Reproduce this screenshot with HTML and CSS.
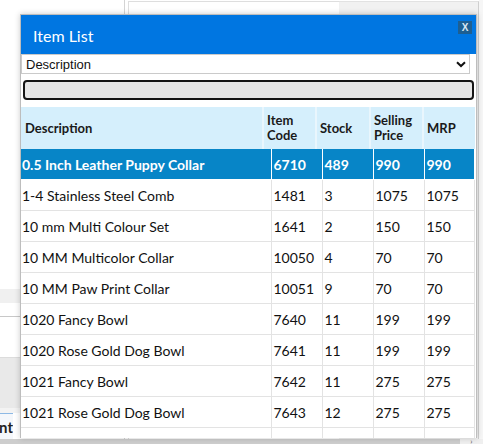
FILE: index.html
```html
<!DOCTYPE html>
<html lang="en">
<head>
  <meta charset="UTF-8" />
  <title>Item List</title>
  <link rel="stylesheet" href="styles.css">
</head>
<body>
  <div class="page">
    <div class="side">
      <div class="side-top"></div>
      <div class="side-band"></div>
      <div class="side-gap"></div>
      <div class="side-box"></div>
      <div class="side-gray"></div>
      <div class="side-tab"><span>Amount</span></div>
    </div>
    <div class="panel"></div>
    <div class="rest"></div>
    <div class="edge"></div>
  </div>
  <div class="hscroll">
    <div class="thumb"></div>
    <div class="arrow">&#8250;</div>
  </div>

  <div class="dialog">
    <div class="dialog-title">
      <span>Item List</span>
      <button class="close-btn">X</button>
    </div>
    <div class="select-wrap">
      <select class="field-select">
        <option>Description</option>
        <option>Item Code</option>
      </select>
      <svg class="chev" width="10" height="7" viewBox="0 0 10 7"><path d="M1 1.2 L5 5 L9 1.2" fill="none" stroke="#111" stroke-width="2"/></svg>
    </div>
    <div class="search-wrap">
      <input type="text" class="search" />
    </div>

    <table class="grid head">
      <colgroup>
        <col style="width:242px"><col style="width:53px"><col style="width:54px"><col style="width:53px"><col>
      </colgroup>
      <tr>
        <th>Description</th>
        <th>Item<br>Code</th>
        <th>Stock</th>
        <th>Selling<br>Price</th>
        <th>MRP</th>
      </tr>
    </table>

    <table class="grid rows">
      <colgroup>
        <col style="width:250px"><col style="width:51px"><col style="width:51px"><col style="width:51px"><col>
      </colgroup>
      <tr class="selected"><td>0.5 Inch Leather Puppy Collar</td><td>6710</td><td>489</td><td>990</td><td>990</td></tr>
      <tr><td>1-4 Stainless Steel Comb</td><td>1481</td><td>3</td><td>1075</td><td>1075</td></tr>
      <tr><td>10 mm Multi Colour Set</td><td>1641</td><td>2</td><td>150</td><td>150</td></tr>
      <tr><td>10 MM Multicolor Collar</td><td>10050</td><td>4</td><td>70</td><td>70</td></tr>
      <tr><td>10 MM Paw Print Collar</td><td>10051</td><td>9</td><td>70</td><td>70</td></tr>
      <tr><td>1020 Fancy Bowl</td><td>7640</td><td>11</td><td>199</td><td>199</td></tr>
      <tr><td>1020 Rose Gold Dog Bowl</td><td>7641</td><td>11</td><td>199</td><td>199</td></tr>
      <tr><td>1021 Fancy Bowl</td><td>7642</td><td>11</td><td>275</td><td>275</td></tr>
      <tr><td>1021 Rose Gold Dog Bowl</td><td>7643</td><td>12</td><td>275</td><td>275</td></tr>
      <tr><td>1022 Fancy Bowl</td><td>7644</td><td>10</td><td>275</td><td>275</td></tr>
    </table>
  </div>
</body>
</html>
```

FILE: styles.css
```css
html, body {
  margin: 0;
  height: 444px;
  overflow: hidden;
}
body {
  font-family: 'Lato', sans-serif;
  background: #fff;
  position: relative;
}

/* page behind the popup */
.page {
  display: flex;
  height: 439px;
}
.side {
  width: 124px;
  border-right: 1px solid #d4d4d4;
  display: flex;
  flex-direction: column;
}
.side-top { height: 289px; }
.side-band { height: 14px; background: #f0f0f0; }
.side-gap { height: 13px; border-bottom: 1px solid #c8c8c8; }
.side-box { height: 40px; border-bottom: 1px solid #dcdcdc; }
.side-gray { height: 50px; background: #e9e9e9; border-bottom: 5px solid #f3f3f3; }
.side-tab {
  flex: 1;
  border-top: 1px solid #8db9e5;
  background: #f4f7fb;
  display: flex;
  justify-content: flex-end;
  align-items: center;
  overflow: hidden;
  width: 13px;
}
.side-tab span {
  font-weight: bold;
  font-size: 15px;
  color: #222;
  white-space: nowrap;
}
.panel {
  width: 210px;
  margin-left: 3px;
  margin-top: 1px;
  border-left: 1px solid #dedede;
  border-top: 1px solid #dedede;
  background: #fff;
}
.rest {
  width: 139px;
  margin-top: 1px;
  border-top: 1px solid #e2e2e2;
  border-right: 1px solid #cfcfcf;
  background: #f1f1f1;
}
.edge {
  flex: 1;
  background: #f6f6f6;
}
.hscroll {
  height: 5px;
  display: flex;
  background: #efefef;
}
.hscroll .thumb {
  width: 460px;
  background: #cdcdcd;
}
.hscroll .arrow {
  flex: 1;
  font-size: 8px;
  line-height: 5px;
  color: #555;
  text-align: center;
}

/* popup */
.dialog {
  position: absolute;
  top: 14px;
  left: 20px;
  width: 455px;
  height: 423px;
  overflow: hidden;
  background: #fff;
  border: 1px solid #bdbdbd;
  border-bottom: none;
  box-shadow: 0 0 6px rgba(0, 0, 0, 0.2);
}
.dialog-title {
  height: 40px;
  background: #0076e1;
  color: #fff;
  font-size: 16px;
  display: flex;
  align-items: center;
  justify-content: space-between;
  padding: 0 4px 0 12px;
  margin-top: -1px;
}
.dialog-title span {
  margin-top: 2px;
}
.close-btn {
  align-self: flex-start;
  margin-top: 7px;
  width: 14px;
  height: 13px;
  padding: 0;
  border: none;
  background: #1d5f92;
  color: #d8e8f6;
  font-family: 'Liberation Sans', sans-serif;
  font-size: 10px;
  font-weight: bold;
  line-height: 13px;
}
.select-wrap {
  position: relative;
  width: 449px;
  height: 20px;
}
.field-select {
  display: block;
  box-sizing: border-box;
  appearance: none;
  -webkit-appearance: none;
  width: 100%;
  height: 20px;
  border: 1px solid #cacaca;
  border-radius: 0;
  background: #fff;
  font-family: 'Liberation Sans', sans-serif;
  font-size: 13px;
  color: #111;
  padding: 0 4px;
  margin: 0;
}
.chev {
  position: absolute;
  right: 4px;
  top: 7px;
  pointer-events: none;
}
.search-wrap {
  padding: 6px 2px 7px 2px;
}
.search {
  display: block;
  box-sizing: border-box;
  width: 451px;
  height: 20px;
  margin: 0;
  background: #e6e6e6;
  border: 2px solid #151515;
  border-radius: 4px;
}

.grid {
  width: 454px;
  border-collapse: collapse;
  table-layout: fixed;
  font-size: 14px;
}
.head th {
  height: 42px;
  padding: 0 3px;
  background: #d5effc;
  border-left: 2px solid #e9f6fd;
  text-align: left;
  font-weight: bold;
  color: #1a1a1a;
  line-height: 15px;
  font-size: 13px;
}
.head th:first-child {
  border-left: none;
  padding-left: 4px;
}
.rows td {
  box-sizing: border-box;
  height: 31px;
  padding: 2px 2px 0 2px;
  border: 1px solid #e3e3e3;
  color: #111;
  white-space: nowrap;
  overflow: hidden;
}
.rows td:first-child { border-left: none; padding-left: 1px; }
.rows tr.selected td {
  height: 30px;
  background: #0785c7;
  color: #fff;
  font-weight: bold;
  border-color: #fff;
  border-top: none;
}
```
